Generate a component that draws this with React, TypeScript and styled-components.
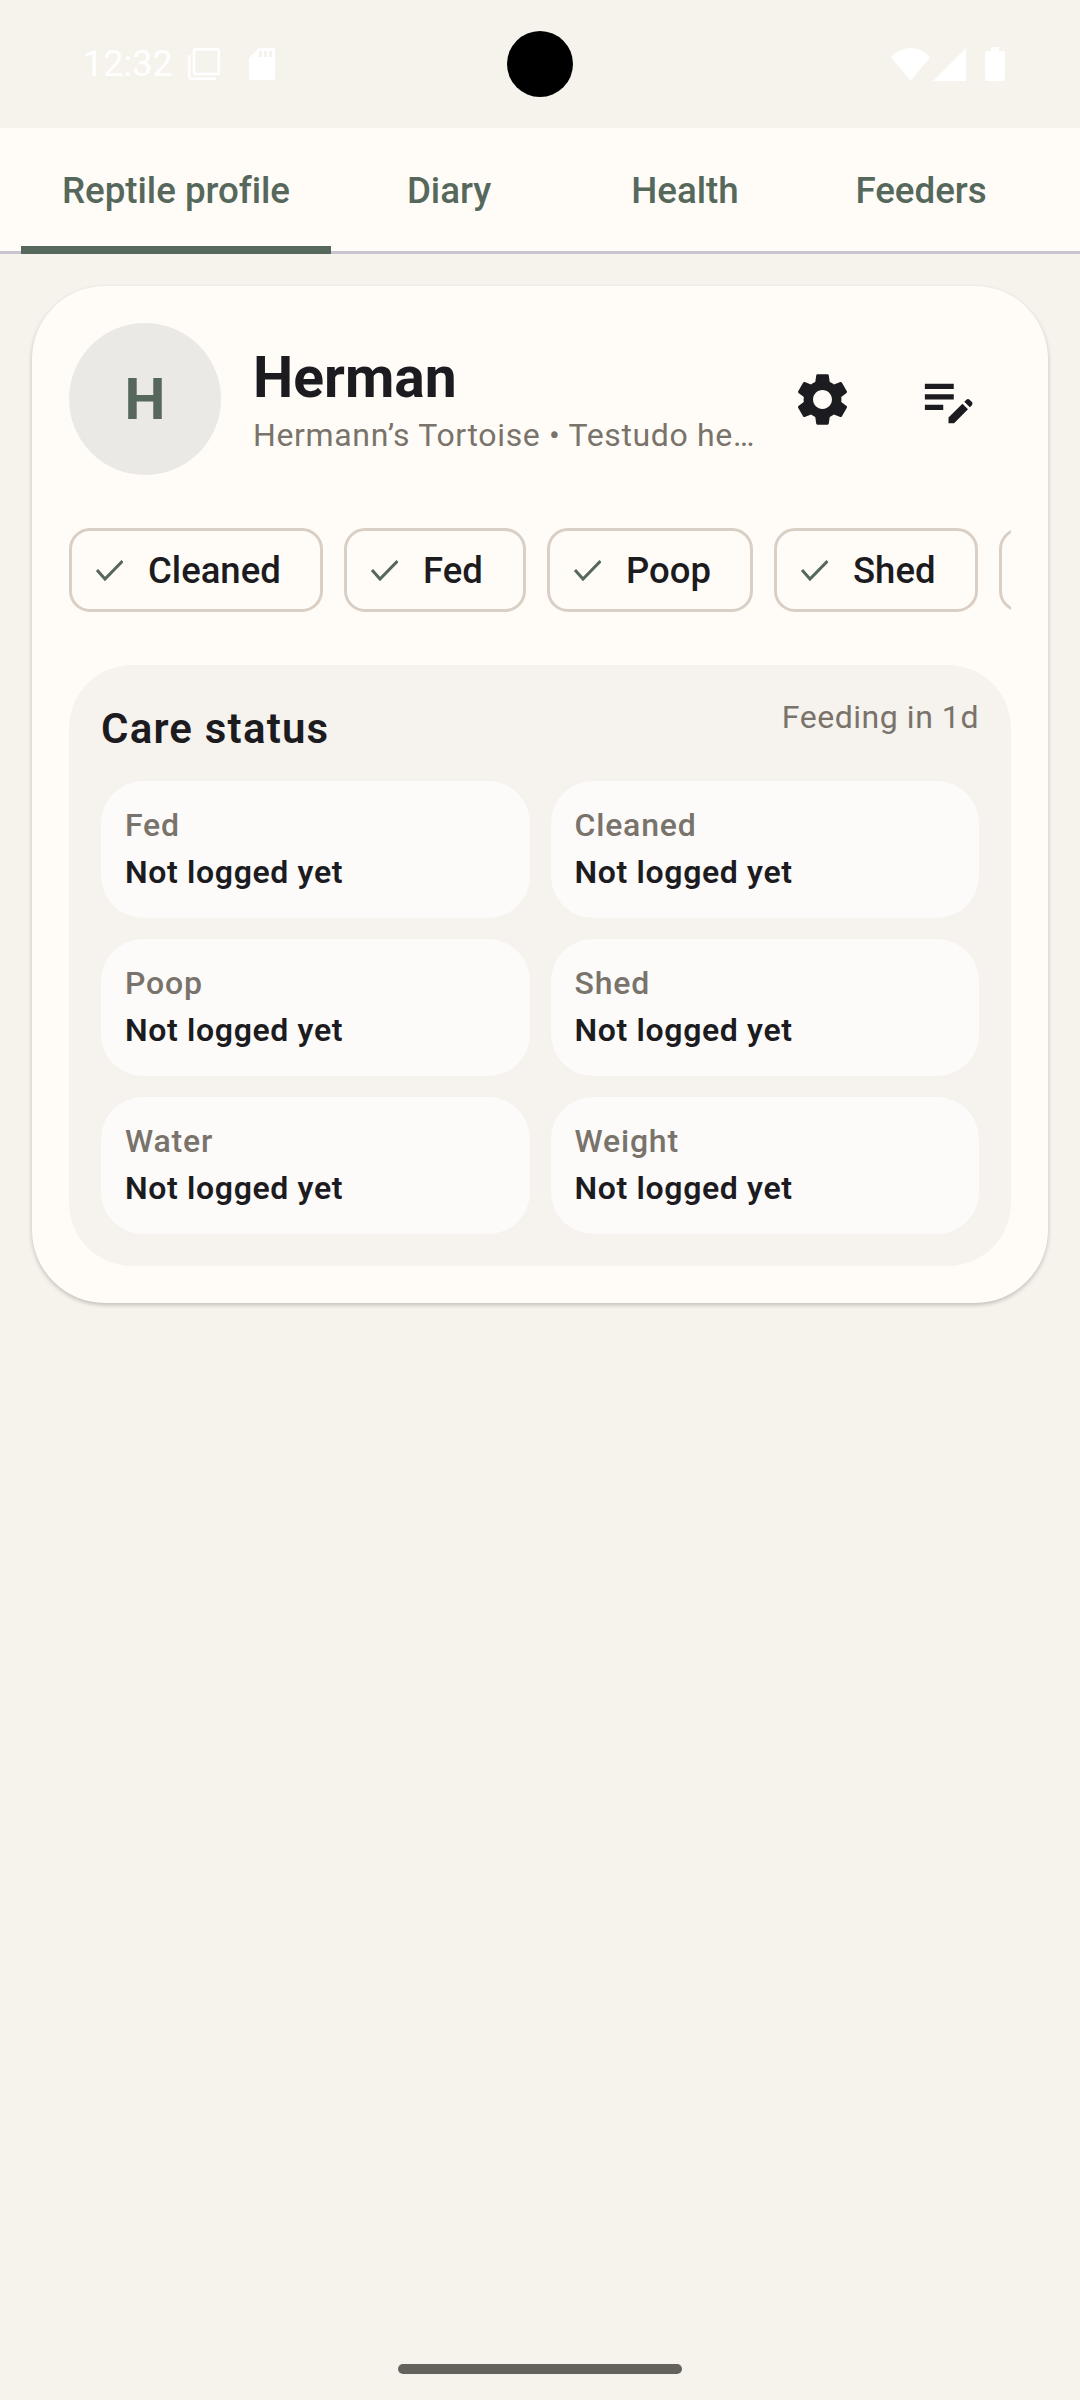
import React from 'react';
import styled, { createGlobalStyle } from 'styled-components';
import { MdEditNote, MdSettings } from 'react-icons/md';

const GlobalStyle = createGlobalStyle`
  html, body {
    margin: 0;
    padding: 0;
    background: #f6f3ec;
  }
  * {
    box-sizing: border-box;
  }
`;

const Page = styled.div`
  width: 1080px;
  height: 2400px;
  display: flex;
  flex-direction: column;
  background: #f6f3ec;
  font-family: Roboto, "Noto Sans", sans-serif;
  color: #1c1b1f;
  overflow: hidden;
`;

const StatusBar = styled.div`
  height: 128px;
  flex: none;
  display: grid;
  grid-template-columns: 1fr 66px 1fr;
  align-items: center;
  padding: 0 75px 0 75px;
  color: #fff;
`;

const StatusLeft = styled.div`
  display: flex;
  align-items: center;
  padding-left: 8px;
  font-size: 36px;
`;

const StatusTime = styled.span`
  width: 105px;
`;

const StatusRight = styled.div`
  display: flex;
  align-items: center;
  justify-content: flex-end;
`;

const CopyIcon = styled.svg`
  width: 32px;
  height: 32px;
  fill: none;
  stroke: #fff;
  stroke-width: 2.5;
`;

const SdIcon = styled.svg`
  width: 26px;
  height: 32px;
  margin-left: 29px;
  fill: #fff;
`;

const WifiIcon = styled.svg`
  width: 39px;
  height: 33px;
  fill: #fff;
`;

const SignalIcon = styled.svg`
  width: 33px;
  height: 33px;
  margin-left: 3px;
  fill: #fff;
`;

const BatteryIcon = styled.svg`
  width: 20px;
  height: 34px;
  margin-left: 19px;
  fill: #fff;
`;

const Camera = styled.div`
  width: 66px;
  height: 66px;
  border-radius: 50%;
  background: #000;
`;

const TabBar = styled.div`
  height: 126px;
  flex: none;
  display: flex;
  padding: 0 21px;
  background: #fffcf7;
  border-bottom: 3px solid #cac4d0;
`;

const Tab = styled.div<{ $active?: boolean; $wide?: boolean }>`
  position: relative;
  width: ${p => (p.$wide ? '310px' : '236px')};
  display: flex;
  align-items: center;
  justify-content: center;
  padding-top: 2px;
  font-size: 36.75px;
  font-weight: 480;
  letter-spacing: -0.05px;
  color: #56685c;

  ${p =>
    p.$active &&
    `
    &::after {
      content: '';
      position: absolute;
      left: 0;
      right: 0;
      bottom: -3px;
      height: 8px;
      background: #56685c;
    }
  `}
`;

const Content = styled.div`
  flex: 1;
  padding: 32px;
`;

const Card = styled.div`
  width: 1016px;
  padding: 37px;
  background: #fffcf7;
  border-radius: 73px;
  box-shadow: 0 2px 4px rgba(0, 0, 0, 0.22);
`;

const Header = styled.div`
  height: 152px;
  display: flex;
  align-items: center;
`;

const Avatar = styled.div`
  width: 152px;
  height: 152px;
  flex: none;
  display: flex;
  align-items: center;
  justify-content: center;
  border-radius: 50%;
  background: #eae9e5;
  color: #56685c;
  font-size: 58px;
  font-weight: 700;
`;

const Names = styled.div`
  width: 505px;
  margin-left: 32px;
  min-width: 0;
`;

const Name = styled.div`
  margin-top: 3px;
  font-size: 57px;
  line-height: 68px;
  font-weight: 700;
`;

const Species = styled.div`
  margin-top: 1px;
  font-size: 32px;
  line-height: 44px;
  letter-spacing: 0.65px;
  color: #79736b;
  white-space: nowrap;
  overflow: hidden;
  text-overflow: ellipsis;
`;

const IconButton = styled.div`
  width: 126px;
  height: 126px;
  flex: none;
  display: flex;
  align-items: center;
  justify-content: center;
  padding-left: 2px;
  color: #1c1b1f;
  font-size: 63px;
`;

const ChipRow = styled.div`
  display: flex;
  gap: 21px;
  margin-top: 53px;
  overflow: hidden;
`;

const Chip = styled.div<{ $width: number }>`
  width: ${p => p.$width}px;
  height: 84px;
  flex: none;
  display: flex;
  align-items: center;
  padding-left: 21px;
  border: 3px solid #d9cfc4;
  border-radius: 21px;
  font-size: 36.5px;
  font-weight: 480;
`;

const ChipCheck = styled.svg`
  width: 30px;
  height: 24px;
  flex: none;
  margin-right: 25px;
  fill: none;
  stroke: #56685c;
  stroke-width: 3;
`;

const Panel = styled.div`
  margin-top: 53px;
  padding: 32px;
  background: #f6f2ed;
  border-radius: 63px;
`;

const PanelHeader = styled.div`
  height: 84px;
  display: flex;
  justify-content: space-between;
`;

const PanelTitle = styled.div`
  margin-top: 6px;
  font-size: 42px;
  line-height: 52px;
  font-weight: 600;
  letter-spacing: 1.2px;
`;

const PanelNote = styled.div`
  font-size: 32px;
  line-height: 40px;
  letter-spacing: 0.55px;
  color: #79736b;
`;

const Grid = styled.div`
  display: grid;
  grid-template-columns: 1fr 1fr;
  gap: 21px;
`;

const Tile = styled.div`
  height: 137px;
  padding: 23px 24px 0;
  background: #fcfbfa;
  border-radius: 42px;
`;

const TileLabel = styled.div`
  font-size: 32px;
  line-height: 42px;
  font-weight: 500;
  letter-spacing: 0.8px;
  color: #79736b;
`;

const TileValue = styled.div`
  margin-top: 5px;
  font-size: 32px;
  line-height: 42px;
  font-weight: 600;
  letter-spacing: 0.65px;
`;

const GestureArea = styled.div`
  height: 36px;
  flex: none;
  display: flex;
  justify-content: center;
  align-items: flex-start;
`;

const GesturePill = styled.div`
  width: 284px;
  height: 10px;
  border-radius: 5px;
  background: #63625c;
`;

const chips = [
  { label: 'Cleaned', width: 254 },
  { label: 'Fed', width: 182 },
  { label: 'Poop', width: 206 },
  { label: 'Shed', width: 204 },
  { label: 'Water', width: 203 },
];

const tiles = ['Fed', 'Cleaned', 'Poop', 'Shed', 'Water', 'Weight'];

export default function App() {
  return (
    <Page>
      <GlobalStyle />
      <StatusBar>
        <StatusLeft>
          <StatusTime>12:32</StatusTime>
          <CopyIcon viewBox="0 0 32 32">
            <rect x="6" y="1.25" width="24.75" height="24.75" rx="1.5" />
            <path d="M1.25 7v22a1.75 1.75 0 0 0 1.75 1.75h25" />
          </CopyIcon>
          <SdIcon viewBox="0 0 26 32">
            <path
              fillRule="evenodd"
              d="M10 0h14a2 2 0 0 1 2 2v28a2 2 0 0 1-2 2H2a2 2 0 0 1-2-2V10zM10 3v6h3V3zM15 3v6h3V3zM20 3v6h3V3z"
            />
          </SdIcon>
        </StatusLeft>
        <Camera />
        <StatusRight>
          <WifiIcon viewBox="0 0 39 33">
            <path d="M0 9.5C5 3.5 12 0 19.5 0S34 3.5 39 9.5L19.5 33z" />
          </WifiIcon>
          <SignalIcon viewBox="0 0 33 33">
            <path d="M33 0v33H0z" />
          </SignalIcon>
          <BatteryIcon viewBox="0 0 20 34">
            <path d="M6 0h8v4h4a2 2 0 0 1 2 2v26a2 2 0 0 1-2 2H2a2 2 0 0 1-2-2V6a2 2 0 0 1 2-2h4z" />
          </BatteryIcon>
        </StatusRight>
      </StatusBar>
      <TabBar>
        <Tab $active $wide>Reptile profile</Tab>
        <Tab>Diary</Tab>
        <Tab>Health</Tab>
        <Tab>Feeders</Tab>
      </TabBar>
      <Content>
        <Card>
          <Header>
            <Avatar>H</Avatar>
            <Names>
              <Name>Herman</Name>
              <Species>Hermann’s Tortoise • Testudo hermanni</Species>
            </Names>
            <IconButton><MdSettings /></IconButton>
            <IconButton><MdEditNote /></IconButton>
          </Header>
          <ChipRow>
            {chips.map(chip => (
              <Chip key={chip.label} $width={chip.width}>
                <ChipCheck viewBox="0 0 30 24">
                  <path d="M4 12l8 9L29.5 3" />
                </ChipCheck>
                {chip.label}
              </Chip>
            ))}
          </ChipRow>
          <Panel>
            <PanelHeader>
              <PanelTitle>Care status</PanelTitle>
              <PanelNote>Feeding in 1d</PanelNote>
            </PanelHeader>
            <Grid>
              {tiles.map(tile => (
                <Tile key={tile}>
                  <TileLabel>{tile}</TileLabel>
                  <TileValue>Not logged yet</TileValue>
                </Tile>
              ))}
            </Grid>
          </Panel>
        </Card>
      </Content>
      <GestureArea>
        <GesturePill />
      </GestureArea>
    </Page>
  );
}
